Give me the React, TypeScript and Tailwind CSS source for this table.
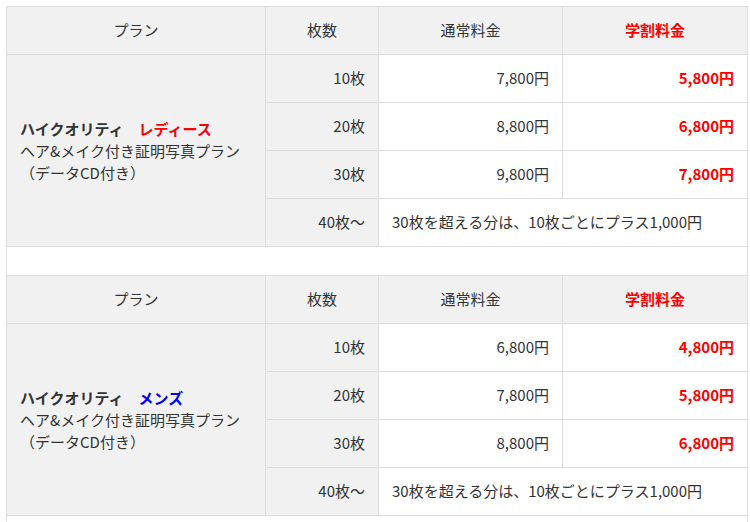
type PriceRow = { count: string; normal: string; student: string };

type Plan = {
  label: string;
  labelClass: string;
  rows: PriceRow[];
};

const plans: Plan[] = [
  {
    label: 'レディース',
    labelClass: 'text-[#ff0000]',
    rows: [
      { count: '10枚', normal: '7,800円', student: '5,800円' },
      { count: '20枚', normal: '8,800円', student: '6,800円' },
      { count: '30枚', normal: '9,800円', student: '7,800円' },
    ],
  },
  {
    label: 'メンズ',
    labelClass: 'text-[#0000ff]',
    rows: [
      { count: '10枚', normal: '6,800円', student: '4,800円' },
      { count: '20枚', normal: '7,800円', student: '5,800円' },
      { count: '30枚', normal: '8,800円', student: '6,800円' },
    ],
  },
];

const cell = 'border border-[#dddddd] h-[48px] px-[13px] align-middle';

function PlanRows({ plan }: { plan: Plan }) {
  return (
    <>
      <tr className="bg-[#f1f1f1]">
        <th className={`${cell} text-center font-normal`}>プラン</th>
        <th className={`${cell} text-center font-normal`}>枚数</th>
        <th className={`${cell} text-center font-normal`}>通常料金</th>
        <th className={`${cell} text-center font-bold text-[#ff0000]`}>
          学割料金
        </th>
      </tr>
      {plan.rows.map((row, i) => (
        <tr key={row.count}>
          {i === 0 && (
            <td rowSpan={4} className={`${cell} bg-[#f1f1f1] text-left leading-[22px]`}>
              <span className="font-bold">ハイクオリティ　</span>
              <span className={`font-bold ${plan.labelClass}`}>{plan.label}</span>
              <br />
              ヘア&amp;メイク付き証明写真プラン
              <br />
              （データCD付き）
            </td>
          )}
          <td className={`${cell} bg-[#f1f1f1] text-right`}>{row.count}</td>
          <td className={`${cell} bg-white text-right`}>{row.normal}</td>
          <td className={`${cell} bg-white text-right font-bold text-[#ff0000]`}>
            {row.student}
          </td>
        </tr>
      ))}
      <tr>
        <td className={`${cell} bg-[#f1f1f1] text-right`}>40枚〜</td>
        <td colSpan={2} className={`${cell} bg-white text-left`}>
          30枚を超える分は、10枚ごとにプラス1,000円
        </td>
      </tr>
    </>
  );
}

function PlanSection({ plan }: { plan: Plan }) {
  return (
    <>
      <PlanRows plan={plan} />
      <tr>
        <td colSpan={4} className="h-[29px] border border-[#dddddd] bg-white" />
      </tr>
    </>
  );
}

export default function App() {
  return (
    <div className="min-h-[522px] bg-white pl-[6px] pt-[6px] font-['Noto_Sans_CJK_JP',sans-serif] text-[15px] text-[#333333]">
      <table className="w-[741px] table-fixed border-collapse">
        <colgroup>
          <col className="w-[259px]" />
          <col className="w-[113px]" />
          <col className="w-[184px]" />
          <col className="w-[185px]" />
        </colgroup>
        <tbody>
          {plans.map((plan) => (
            <PlanSection key={plan.label} plan={plan} />
          ))}
        </tbody>
      </table>
    </div>
  );
}
